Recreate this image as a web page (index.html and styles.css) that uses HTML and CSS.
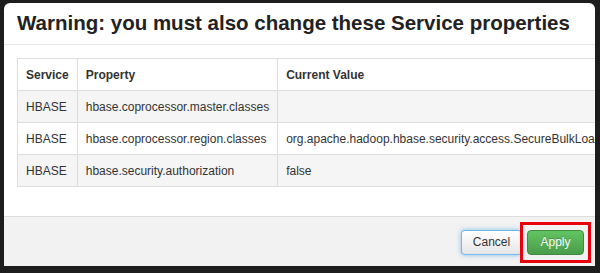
FILE: index.html
```html
<!doctype html>
<html lang="en">
  <head>
    <meta charset="UTF-8" />
    <title>Service properties</title>
    <link rel="stylesheet" href="styles.css">
  </head>
  <body>
    <div class="modal">
      <div class="modal-header">
        <h3>Warning: you must also change these Service properties</h3>
      </div>
      <div class="modal-body">
        <table class="table">
          <thead>
            <tr>
              <th class="col-service">Service</th>
              <th class="col-property">Property</th>
              <th>Current Value</th>
            </tr>
          </thead>
          <tbody>
            <tr>
              <td>HBASE</td>
              <td>hbase.coprocessor.master.classes</td>
              <td></td>
            </tr>
            <tr>
              <td>HBASE</td>
              <td>hbase.coprocessor.region.classes</td>
              <td>org.apache.hadoop.hbase.security.access.SecureBulkLoadEndpoint</td>
            </tr>
            <tr>
              <td>HBASE</td>
              <td>hbase.security.authorization</td>
              <td>false</td>
            </tr>
          </tbody>
        </table>
      </div>
      <div class="modal-footer">
        <button class="btn btn-cancel">Cancel</button>
        <span class="highlight">
          <button class="btn btn-success">Apply</button>
        </span>
      </div>
    </div>
  </body>
</html>
```

FILE: styles.css
```css
* {
  margin: 0;
  padding: 0;
  box-sizing: border-box;
}

body {
  font-family: "Liberation Sans", Arial, sans-serif;
  background: #1d1d1d;
  color: #333;
  padding: 3px 5px 0 4px;
  height: 273px;
  overflow: hidden;
}

.modal {
  width: 591px;
  height: 263px;
  background: white;
  border-radius: 6px 6px 0 0;
  overflow: hidden;
  display: flex;
  flex-direction: column;
}

.modal-header {
  height: 42px;
  padding: 0 13px;
  border-bottom: 1px solid #e5e5e5;
  display: flex;
  align-items: center;
}

.modal-header h3 {
  font-size: 20.5px;
  font-weight: bold;
  color: #222;
  white-space: nowrap;
  padding-bottom: 2px;
}

.modal-body {
  flex: 1;
  padding: 13px 0 0 13px;
}

.table {
  border-collapse: collapse;
  font-size: 12px;
  white-space: nowrap;
}

.table th,
.table td {
  border: 1px solid #ddd;
  height: 32px;
  padding: 0 8px;
  text-align: left;
  line-height: 16px;
}

.table th {
  font-weight: bold;
  color: #333;
}

.table td:last-child,
.table th:last-child {
  width: 400px;
}

.col-service {
  width: 58px;
}

.col-property {
  width: 200px;
}

.table tbody tr:nth-child(odd) {
  background: #f5f5f5;
}

.modal-footer {
  height: 50px;
  background: #f2f2f2;
  border-top: 1px solid #ddd;
  display: flex;
  align-items: center;
  justify-content: flex-end;
  padding: 1px 4px 0 0;
}

.btn {
  font-family: "Liberation Sans", Arial, sans-serif;
  font-size: 12px;
  height: 25px;
  border-radius: 4px;
  cursor: pointer;
}

.btn-cancel {
  width: 61px;
  color: #333;
  background: linear-gradient(#ffffff, #e6e6e6);
  border: 1px solid rgba(82, 168, 236, 0.8);
  box-shadow: 0 0 5px rgba(82, 168, 236, 0.7);
}

.highlight {
  display: flex;
  margin-left: -2px;
  padding: 5px 4px;
  border: 3px solid #e8000b;
}

.btn-success {
  width: 57px;
  color: white;
  text-shadow: 0 -1px 0 rgba(0, 0, 0, 0.25);
  background: linear-gradient(#62c462, #4a9d4a);
  border: 1px solid #3f8a3f;
}
```
